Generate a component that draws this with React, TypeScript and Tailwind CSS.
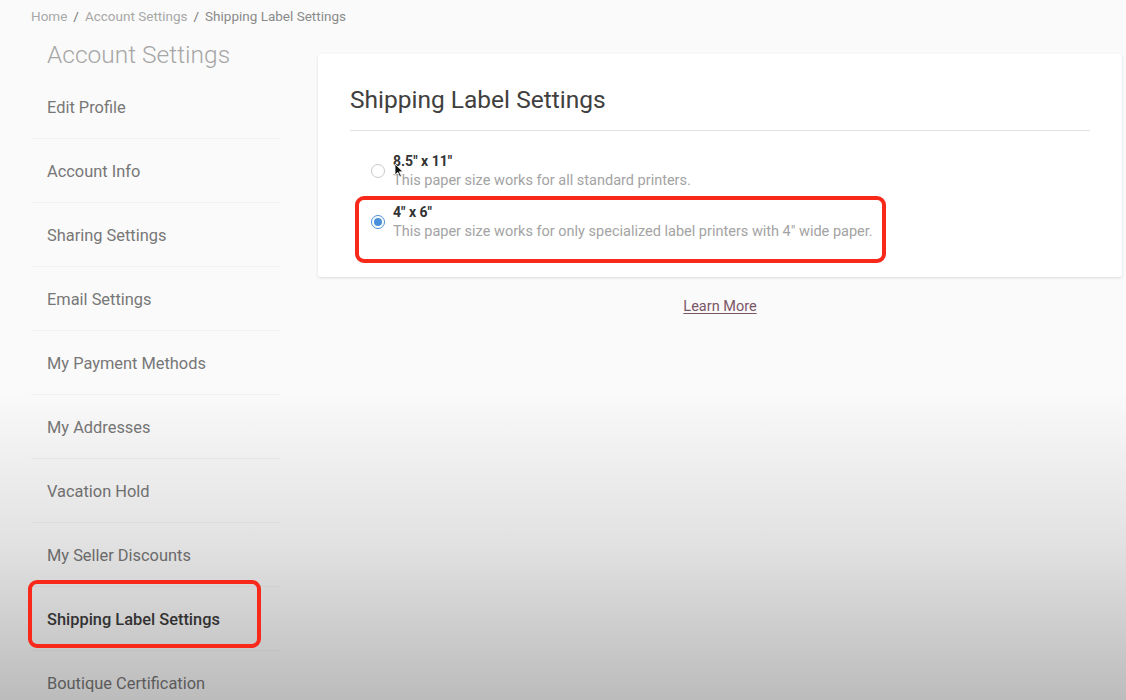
import React from "react";

const items = [
  "Edit Profile",
  "Account Info",
  "Sharing Settings",
  "Email Settings",
  "My Payment Methods",
  "My Addresses",
  "Vacation Hold",
  "My Seller Discounts",
  "Shipping Label Settings",
  "Boutique Certification",
];

function Radio({ checked }: { checked?: boolean }) {
  return (
    <span
      className={
        "flex h-[14px] w-[14px] shrink-0 items-center justify-center rounded-full border bg-white " +
        (checked ? "border-[#4a90d9]" : "border-[#c8c8c8]")
      }
    >
      {checked && <span className="h-[8px] w-[8px] rounded-full bg-[#4a90d9]" />}
    </span>
  );
}

export default function App() {
  return (
    <div
      className="relative h-[700px] w-[1126px] overflow-hidden bg-[#fafafa]"
      style={{ fontFamily: "Roboto, 'Liberation Sans', sans-serif" }}
    >
      <div className="flex h-[33px] items-center gap-[6px] pl-[31px] text-[13.5px] text-[#a8a8a8]">
        <span>Home</span>
        <span className="text-[#777]">/</span>
        <span>Account Settings</span>
        <span className="text-[#777]">/</span>
        <span className="text-[#8a8a8a]">Shipping Label Settings</span>
      </div>

      <div className="flex">
        <aside className="w-[318px] shrink-0 pl-[31px] pr-[38px]">
          <div className="mt-[2px] pl-[16px] text-[24.5px] font-light leading-[40px] text-[#a6a6a6]">
            Account Settings
          </div>
          <ul>
            {items.map((it) => (
              <li
                key={it}
                className={
                  "flex h-[64px] items-center border-b border-[#f1f1f1] pl-[16px] pt-[4px] text-[16.4px] " +
                  (it === "Shipping Label Settings"
                    ? "font-medium text-[#3d3d3d]"
                    : "text-[#777]")
                }
              >
                {it}
              </li>
            ))}
          </ul>
        </aside>

        <main className="flex w-[804px] flex-col items-center pt-[21px]">
          <div className="w-[804px] rounded-[2px] bg-white px-[32px] pb-[36px] pt-[32px] shadow-[0_1px_3px_rgba(0,0,0,0.12)]">
            <h2 className="text-[24.5px] leading-[28px] text-[#404040]">
              Shipping Label Settings
            </h2>
            <div className="mt-[16px] h-px w-full bg-[#e2e2e2]" />
            <div className="flex flex-col gap-[11px] pl-[21px] pt-[20px]">
              <label className="flex items-center gap-[8px]">
                <Radio />
                <span className="flex flex-col">
                  <span className="text-[14px] font-bold leading-[20px] text-[#333]">
                    8.5" x 11"
                  </span>
                  <span className="text-[14.5px] leading-[20px] text-[#a3a3a3]">
                    This paper size works for all standard printers.
                  </span>
                </span>
              </label>
              <label className="flex items-center gap-[8px]">
                <Radio checked />
                <span className="flex flex-col">
                  <span className="text-[14px] font-bold leading-[20px] text-[#333]">
                    4" x 6"
                  </span>
                  <span className="text-[14.5px] leading-[19px] text-[#a3a3a3]">
                    This paper size works for only specialized label printers with 4" wide paper.
                  </span>
                </span>
              </label>
            </div>
          </div>
          <a className="mt-[20px] text-[14.5px] leading-[20px] text-[#7a5566] underline underline-offset-2">
            Learn More
          </a>
        </main>
      </div>

      {/* cursor */}
      <svg
        className="pointer-events-none absolute left-[394px] top-[163px]"
        width="10"
        height="15"
        viewBox="0 0 10 15"
      >
        <path d="M1 1 L1 12 L3.8 9.4 L5.8 14 L7.4 13.3 L5.4 8.8 L9 8.8 Z" fill="#111" stroke="#fff" strokeWidth="0.8" />
      </svg>

      {/* video fade overlay */}
      <div className="pointer-events-none absolute inset-x-0 bottom-0 h-[310px] bg-gradient-to-b from-transparent via-black/[0.1] to-black/[0.25]" />

      {/* annotation boxes */}
      <div className="pointer-events-none absolute left-[355px] top-[196px] h-[67px] w-[531px] rounded-[9px] border-[4px] border-[#f8281a]" />
      <div className="pointer-events-none absolute left-[28px] top-[580px] h-[68px] w-[233px] rounded-[9px] border-[4px] border-[#f8281a]" />
    </div>
  );
}
